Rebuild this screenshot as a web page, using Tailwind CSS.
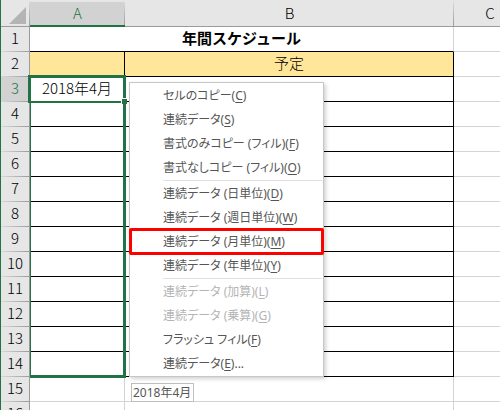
<!DOCTYPE html>
<html lang="ja">
<head>
<meta charset="utf-8">
<meta name="viewport" content="width=device-width, initial-scale=1">
<title>年間スケジュール</title>
<script src="https://cdn.jsdelivr.net/npm/@tailwindcss/browser@4"></script>
</head>
<body class="h-screen overflow-hidden bg-white font-['Noto_Sans_CJK_JP',sans-serif] text-black">
<main class="relative h-full overflow-hidden border-l border-[#217346]">
  <table class="w-[525px] table-fixed border-separate border-spacing-0 text-center text-[15px] leading-[22px] font-light [&_th]:p-0 [&_td]:p-0">
    <colgroup>
      <col class="w-[29px]"><col class="w-[95px]"><col class="w-[329px]"><col class="w-[72px]">
    </colgroup>
    <thead class="bg-[#e6e6e6] [&_th]:h-[27px] [&_th]:border-b [&_th]:border-[#9b9b9b] [&_th]:bg-[linear-gradient(to_bottom,#dcdcdc,#9b9b9b)] [&_th]:bg-[length:1px_25px] [&_th]:bg-right-bottom [&_th]:bg-no-repeat [&_th]:font-light">
      <tr>
        <th aria-label="すべて選択"><svg class="ml-2 mt-1 block h-[17px] w-[17px]" viewBox="0 0 17 17"><path d="M17 0V17H0Z" fill="#b4b4b4"/></svg></th>
        <th scope="col" class="text-[#217346] shadow-[inset_0_2px_0_#e6e6e6,inset_0_-1px_0_#217346] bg-[#d2d2d2] border-b-[#217346]!">A</th>
        <th scope="col">B</th>
        <th scope="col">C</th>
      </tr>
    </thead>
    <tbody class="[&_td]:align-top [&_th]:align-top [&_th]:h-[25px] [&_th]:border-r [&_th]:border-[#9b9b9b] [&_th]:bg-[#e6e6e6] [&_th]:bg-[linear-gradient(to_right,#d8d8d8,#9b9b9b)] [&_th]:bg-[length:100%_1px] [&_th]:bg-bottom [&_th]:bg-no-repeat [&_th]:font-light [&_td]:border-r [&_td]:border-b [&_td]:border-[#d4d4d4]">
      <tr><th scope="row">1</th><td colspan="2" class="border-b-black! font-bold">年間スケジュール</td><td></td></tr>
      <tr><th scope="row">2</th><td class="border-black! bg-[#ffe699]"></td><td class="border-black! bg-[#ffe699]">予定</td><td></td></tr>
      <tr><th scope="row" class="bg-[#d2d2d2]! text-[#217346]">3</th><td class="border-black!">2018年4月</td><td class="border-black!"></td><td></td></tr>
      <tr><th scope="row">4</th><td class="border-black!"></td><td class="border-black!"></td><td></td></tr>
      <tr><th scope="row">5</th><td class="border-black!"></td><td class="border-black!"></td><td></td></tr>
      <tr><th scope="row">6</th><td class="border-black!"></td><td class="border-black!"></td><td></td></tr>
      <tr><th scope="row">7</th><td class="border-black!"></td><td class="border-black!"></td><td></td></tr>
      <tr><th scope="row">8</th><td class="border-black!"></td><td class="border-black!"></td><td></td></tr>
      <tr><th scope="row">9</th><td class="border-black!"></td><td class="border-black!"></td><td></td></tr>
      <tr><th scope="row">10</th><td class="border-black!"></td><td class="border-black!"></td><td></td></tr>
      <tr><th scope="row">11</th><td class="border-black!"></td><td class="border-black!"></td><td></td></tr>
      <tr><th scope="row">12</th><td class="border-black!"></td><td class="border-black!"></td><td></td></tr>
      <tr><th scope="row">13</th><td class="border-black!"></td><td class="border-black!"></td><td></td></tr>
      <tr><th scope="row">14</th><td class="border-black!"></td><td class="border-black!"></td><td></td></tr>
      <tr><th scope="row">15</th><td></td><td></td><td></td></tr>
      <tr><th scope="row">16</th><td></td><td></td><td></td></tr>
    </tbody>
  </table>

  <!-- Selection A3:A14, active cell A3 and fill handle -->
  <div class="pointer-events-none absolute left-[29px] top-[75px] h-[303px] w-[96px] border-3 border-l-1 border-[#217346]"></div>
  <div class="pointer-events-none absolute left-[27px] top-[75px] h-[28px] w-[98px] border-3 border-b-2 border-[#217346]"></div>
  <div class="pointer-events-none absolute left-[120px] top-[98px] h-[6px] w-[6px] border-l border-t border-white bg-[#217346]"></div>

  <!-- Auto fill options -->
  <div role="menu" class="absolute left-[128px] top-[82px] w-[195px] border border-[#c6c6c6] bg-white pt-px font-['Noto_Sans','Noto_Sans_CJK_JP',sans-serif] text-[12px] text-[#555] shadow-[2px_2px_4px_rgba(0,0,0,0.18)] [font-feature-settings:'palt'] [&_button]:block [&_button]:h-6 [&_button]:w-full [&_button]:whitespace-nowrap [&_button]:pl-[33px] [&_button]:text-left [&_button]:leading-6 [&_u]:underline-offset-2 [&_hr]:mb-px [&_hr]:ml-[33px] [&_hr]:mr-px [&_hr]:border-[#e1e1e1]">
    <button role="menuitem">セルのコピー(<u>C</u>)</button>
    <button role="menuitem">連続データ(<u>S</u>)</button>
    <button role="menuitem">書式のみコピー (フィル)(<u>F</u>)</button>
    <button role="menuitem">書式なしコピー (フィル)(<u>O</u>)</button>
    <hr>
    <button role="menuitem">連続データ (日単位)(<u>D</u>)</button>
    <button role="menuitem">連続データ (週日単位)(<u>W</u>)</button>
    <div class="relative">
      <button role="menuitem">連続データ (月単位)(<u>M</u>)</button>
      <span class="pointer-events-none absolute -left-px -right-px -top-0.5 -bottom-px rounded-[2px] border-3 border-[#ff0000]"></span>
    </div>
    <button role="menuitem">連続データ (年単位)(<u>Y</u>)</button>
    <hr>
    <button role="menuitem" disabled class="text-[#b4b4b4]">連続データ (加算)(<u>L</u>)</button>
    <button role="menuitem" disabled class="text-[#b4b4b4]">連続データ (乗算)(<u>G</u>)</button>
    <button role="menuitem">フラッシュ フィル(<u>F</u>)</button>
    <button role="menuitem">連続データ(<u>E</u>)...</button>
  </div>

  <div role="tooltip" class="absolute left-[130px] top-[383px] h-[19px] border border-[#bebebe] bg-white pl-px pr-0.5 font-['Noto_Sans','Noto_Sans_CJK_JP',sans-serif] text-[12px] leading-[17px] text-[#575757]">2018年4月</div>
</main>
</body>
</html>
